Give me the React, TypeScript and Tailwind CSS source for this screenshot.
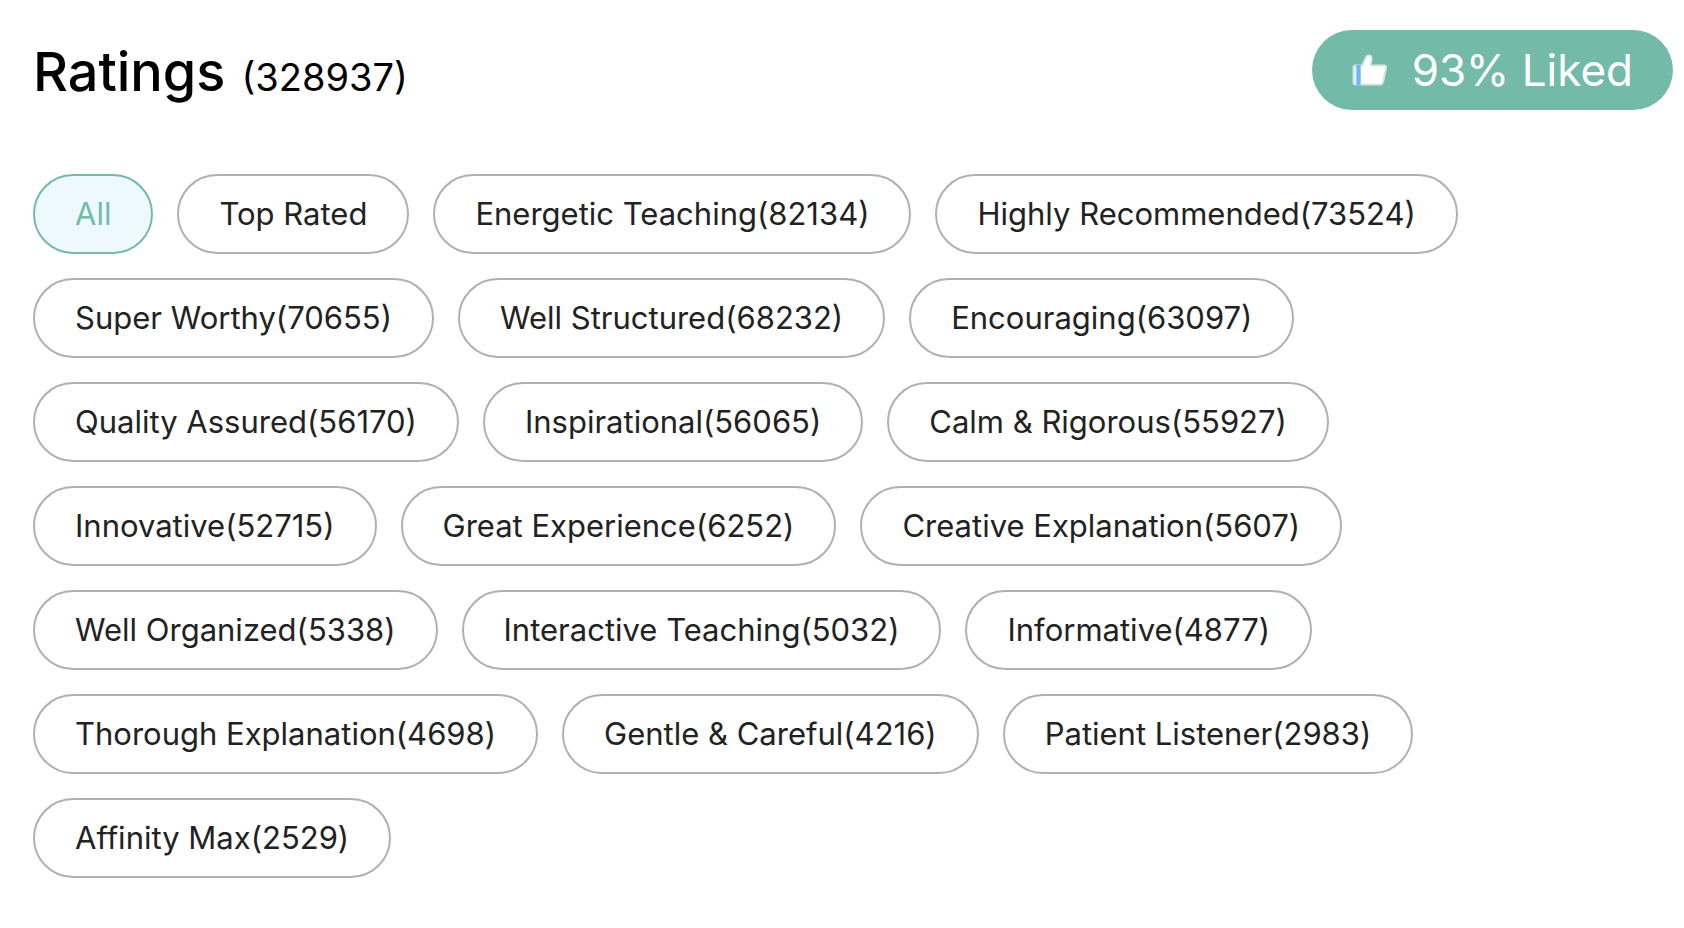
import React, { useState } from "react";
import clsx from "clsx";

const tags = [
  "All",
  "Top Rated",
  "Energetic Teaching(82134)",
  "Highly Recommended(73524)",
  "Super Worthy(70655)",
  "Well Structured(68232)",
  "Encouraging(63097)",
  "Quality Assured(56170)",
  "Inspirational(56065)",
  "Calm & Rigorous(55927)",
  "Innovative(52715)",
  "Great Experience(6252)",
  "Creative Explanation(5607)",
  "Well Organized(5338)",
  "Interactive Teaching(5032)",
  "Informative(4877)",
  "Thorough Explanation(4698)",
  "Gentle & Careful(4216)",
  "Patient Listener(2983)",
  "Affinity Max(2529)",
];

function ThumbIcon() {
  return (
    <svg width="36" height="32" viewBox="0 0 36 32" aria-hidden="true">
      <path
        d="M3.500 10.500H9.500L13 3.200C13.800 1.300 15.200.5 17 .5c2.500 0 3.800 1.900 3.500 4.300L19.700 10.500H32c2.200 0 3.400 1.500 3 3.500l-3 14c-.5 2.200-1.800 3.500-4 3.500H3.500c-1.800 0-3-1.200-3-3v-15c0-1.800 1.200-3 3-3Z"
        fill="#d3eae3"
      />
      <path
        d="M8.500 12H10.200L14.300 3.600C14.900 2.300 15.800 1.800 17 1.800c1.700 0 2.500 1.300 2.300 3L18.300 11.800H32c1.400 0 2 .8 1.700 2l-3 13.700c-.4 1.800-1.300 2.700-3 2.700H8.500Z"
        fill="#fff"
        stroke="#b3dacf"
        strokeWidth="0.6"
      />
      <path
        d="M4.500 12H3.500C2.500 12 2 12.700 2 13.700V28.500c0 1 .5 1.700 1.500 1.700h1Z"
        fill="#f1f9f7"
        stroke="#b3dacf"
        strokeWidth="0.6"
      />
      <path d="M4.500 11H8.500V31.500H4.500Z" fill="#6db6ff" />
    </svg>
  );
}

function App() {
  const [active, setActive] = useState("All");

  return (
    <section className="bg-white pt-[30px] pr-[11px] pb-12 pl-[33px] font-['Inter',sans-serif]">
      <div className="flex h-20 items-center justify-between">
        <h1 className="flex items-baseline gap-4 pt-1 leading-none text-black">
          <span className="text-[54px] font-medium">Ratings</span>
          <span className="text-[38px]">(328937)</span>
        </h1>
        <div className="flex h-20 items-center gap-6 rounded-full bg-[#73bba8] px-10 text-[44px] text-white">
          <ThumbIcon />
          <span>93% Liked</span>
        </div>
      </div>

      <div className="mt-16 flex flex-wrap gap-6">
        {tags.map((tag) => (
          <button
            key={tag}
            type="button"
            onClick={() => setActive(tag)}
            className={clsx(
              "h-20 rounded-full border-2 px-10 text-[31px]",
              tag === active
                ? "border-[#73bba8] bg-[#eef8ff] text-[#73bba8]"
                : "border-[#b0b0b0] bg-white text-[#222]"
            )}
          >
            {tag}
          </button>
        ))}
      </div>
    </section>
  );
}

export default App;
